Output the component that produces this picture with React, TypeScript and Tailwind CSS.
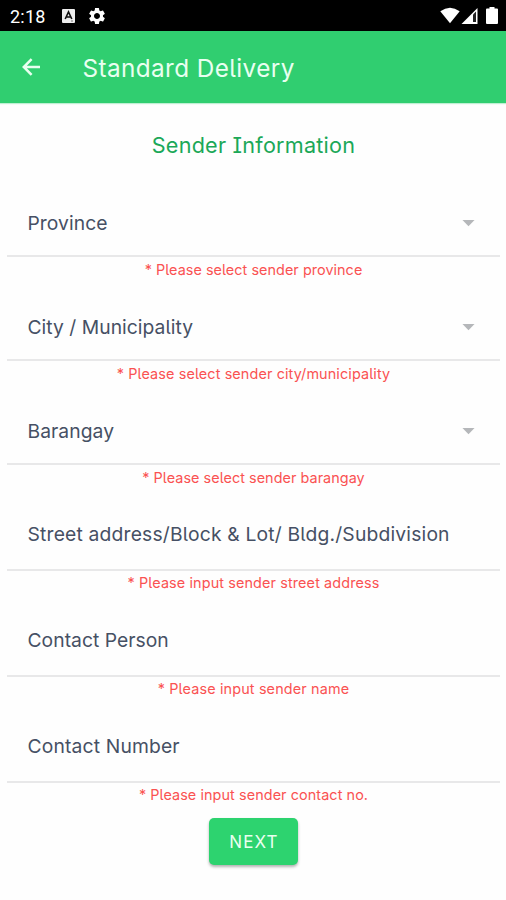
import { MdArrowDropDown, MdSettings } from "react-icons/md";

type Field = {
  label: string;
  error: string;
  select?: boolean;
  labelSpacing: string;
  errorSpacing: string;
};

const fields: Field[] = [
  { label: "Province", error: "* Please select sender province", select: true, labelSpacing: "tracking-[0.05px]", errorSpacing: "tracking-[0.05px]" },
  { label: "City / Municipality", error: "* Please select sender city/municipality", select: true, labelSpacing: "tracking-[0.03px]", errorSpacing: "tracking-[0.12px]" },
  { label: "Barangay", error: "* Please select sender barangay", select: true, labelSpacing: "tracking-[0.05px]", errorSpacing: "tracking-[0.05px]" },
  { label: "Street address/Block & Lot/ Bldg./Subdivision", error: "* Please input sender street address", labelSpacing: "tracking-[0.18px]", errorSpacing: "tracking-[0.12px]" },
  { label: "Contact Person", error: "* Please input sender name", labelSpacing: "tracking-[0.03px]", errorSpacing: "tracking-[0.15px]" },
  { label: "Contact Number", error: "* Please input sender contact no.", labelSpacing: "tracking-[0.15px]", errorSpacing: "tracking-[0.08px]" },
];

function StatusBar() {
  return (
    <div className="flex h-[31px] items-center bg-black pl-[10px] pr-[8px] text-white">
      <span className="w-[52px] pt-[2px] font-[Roboto,sans-serif] text-[18px] leading-none tracking-[0.2px]">2:18</span>
      <svg className="mt-[1px] h-[14px] w-[13px]" viewBox="0 0 13 14">
        <rect width="13" height="14" rx="1" fill="#eee" />
        <path d="M3.2 10 6.5 3 9.8 10M4.6 8h3.8" fill="none" stroke="#111" strokeWidth="1.6" />
        <path d="M9 12h2" stroke="#777" />
      </svg>
      <MdSettings className="ml-[12px] mt-[1px] h-[20px] w-[20px]" />
      <div className="ml-auto flex items-center">
        <svg className="h-[17px] w-[20px]" viewBox="0 0 20 17">
          <path d="M0.3 4.3Q10-3 19.7 4.3L10 16.2Z" fill="#fff" />
        </svg>
        <svg className="ml-[1px] h-[17px] w-[17px]" viewBox="0 0 17 17">
          <path d="M0.5 17 16.5 1V17Z" fill="#fff" />
          <path d="M12 7.5 15 4.5V15H12Z" fill="#222" />
        </svg>
        <svg className="ml-[8px] h-[17px] w-[12px]" viewBox="0 0 12 17">
          <path d="M3.5 0h5v1.6H11a1 1 0 0 1 1 1V16a1 1 0 0 1-1 1H1a1 1 0 0 1-1-1V2.600a1 1 0 0 1 1-1h2.500Z" fill="#fff" />
        </svg>
      </div>
    </div>
  );
}

function FormField({ label, error, select, labelSpacing, errorSpacing }: Field) {
  return (
    <div className={select ? "h-[104px]" : "h-[106px]"}>
      <div
        className={`flex items-center justify-between border-b-2 border-[#e8e8e9] pr-[17px] pl-[20.5px] ${select ? "h-[65px]" : "h-[67px] pb-[3px]"}`}
      >
        <span className={`text-[19.3px] leading-none whitespace-nowrap text-[#465064] ${labelSpacing}`}>{label}</span>
        {select && <MdArrowDropDown className="mb-[3px] h-[29px] w-[29px] text-[#b5b7ba]" />}
      </div>
      <p className={`text-center text-[14.4px] leading-[16px] whitespace-nowrap text-[#fa5252] ${select ? "pt-[5px]" : "pt-[4px]"} ${errorSpacing}`}>{error}</p>
    </div>
  );
}

export default function App() {
  return (
    <div className="flex h-[900px] w-[506px] flex-col overflow-hidden bg-[#fefefe] font-[Inter,sans-serif] [font-feature-settings:'cv05','cv08']">
      <StatusBar />
      <header className="flex h-[72px] shrink-0 items-center bg-[#30ce70] pl-[22px] text-[#e9fff0] shadow-[0_1px_1px_rgba(48,206,112,0.3)]">
        <svg className="h-[18px] w-[18px]" viewBox="0 0 18 18" fill="none" stroke="currentColor" strokeWidth="2.500">
          <path d="M18 9H2M9.600 1.200 1.800 9l7.800 7.800" />
        </svg>
        <h1 className="ml-[42.500px] pt-[2px] text-[24.3px] leading-none tracking-[0.4px]">Standard Delivery</h1>
      </header>
      <main className="pr-[6px] pl-[7px]">
        <h2 className="flex h-[89px] items-start justify-center pt-[31px] text-[21.6px] leading-[22px] tracking-[0.23px] text-[#1ba858]">
          <span>Sender Information</span>
        </h2>
        <form>
          {fields.map((field) => (
            <FormField key={field.label} {...field} />
          ))}
          <div className="flex justify-center">
            <button
              type="button"
              className="-mt-[4px] h-[47px] w-[89px] rounded-[5px] bg-[#2dd36f] pt-[2px] pl-px text-[17px] tracking-[1.1px] text-[#e9fff0] shadow-[0_2px_3px_rgba(0,0,0,0.3)]"
            >
              NEXT
            </button>
          </div>
        </form>
      </main>
    </div>
  );
}
